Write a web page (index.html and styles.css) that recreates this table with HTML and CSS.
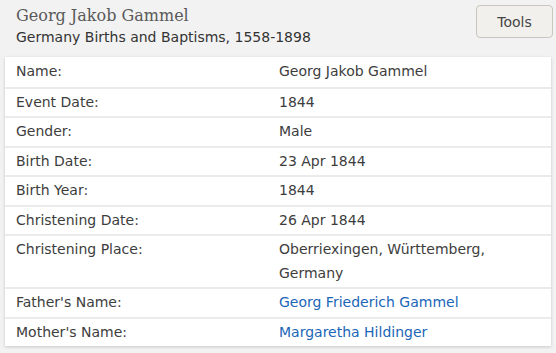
FILE: index.html
```html
<!DOCTYPE html>
<html>
<head>
<meta charset="utf-8">
<link rel="stylesheet" href="styles.css">
</head>
<body>
<div class="page">
  <div class="header">
    <div class="titles">
      <h1 class="title">Georg Jakob Gammel</h1>
      <div class="subtitle">Germany Births and Baptisms, 1558-1898</div>
    </div>
    <button class="tools">Tools</button>
  </div>
  <div class="card">
    <div class="row"><div class="label">Name:</div><div class="value">Georg Jakob Gammel</div></div>
    <div class="row"><div class="label">Event Date:</div><div class="value">1844</div></div>
    <div class="row"><div class="label">Gender:</div><div class="value">Male</div></div>
    <div class="row"><div class="label">Birth Date:</div><div class="value">23 Apr 1844</div></div>
    <div class="row"><div class="label">Birth Year:</div><div class="value">1844</div></div>
    <div class="row"><div class="label">Christening Date:</div><div class="value">26 Apr 1844</div></div>
    <div class="row"><div class="label">Christening Place:</div><div class="value">Oberriexingen, Württemberg,<br>Germany</div></div>
    <div class="row"><div class="label">Father's Name:</div><div class="value"><a class="link" href="#">Georg Friederich Gammel</a></div></div>
    <div class="row"><div class="label">Mother's Name:</div><div class="value"><a class="link" href="#">Margaretha Hildinger</a></div></div>
  </div>
</div>
</body>
</html>
```
FILE: styles.css
```css
html, body {
  margin: 0;
  padding: 0;
  background: #f2f2f2;
}
body {
  font-family: "DejaVu Sans", Verdana, sans-serif;
  color: #3d3d3d;
}
.page {
  padding: 0 5px 3px 5px;
}
.header {
  display: flex;
  justify-content: space-between;
  align-items: flex-start;
  padding: 5px 0 0 11px;
  height: 52px;
}
.title {
  margin: 0;
  font-family: "DejaVu Serif", Georgia, serif;
  font-weight: normal;
  font-size: 16px;
  line-height: 22px;
  color: #595959;
}
.subtitle {
  font-size: 14px;
  line-height: 20px;
  color: #333;
}
.tools {
  margin: 0 -2px 0 0;
  width: 77px;
  height: 33px;
  border: 1px solid #c9c6bf;
  border-radius: 4px;
  background: #f1f0ec;
  font-family: "DejaVu Sans", Verdana, sans-serif;
  font-size: 14px;
  color: #444;
  padding: 0;
}
.card {
  background: #fff;
  box-shadow: 0 1px 3px rgba(0,0,0,0.18);
}
.row {
  display: grid;
  grid-template-columns: 263px 1fr;
  padding: 2px 11px 2px 11px;
  line-height: 23.5px;
  font-size: 14px;
  border-top: 2px solid #ebebeb;
}
.row:first-child {
  border-top: none;
  padding-top: 3px;
  padding-bottom: 3px;
}
.link {
  color: #1a66b8;
  text-decoration: none;
}
```
